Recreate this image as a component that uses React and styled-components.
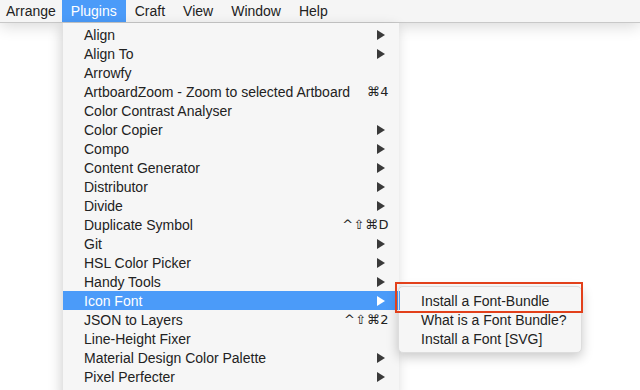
import styled, { createGlobalStyle } from 'styled-components';

const GlobalStyle = createGlobalStyle`
  html, body {
    margin: 0;
    padding: 0;
    background: #fff;
    overflow: hidden;
  }
  body {
    font-family: "Liberation Sans", Arial, "DejaVu Sans", sans-serif;
    font-size: 13px;
    color: #222;
  }
`;

const Screen = styled.div`
  width: 640px;
  height: 390px;
  position: relative;
  overflow: hidden;
  background: #fff;
`;

const MenuBar = styled.div`
  height: 22px;
  display: flex;
  align-items: stretch;
  background: #f5f5f5;
  border-bottom: 1px solid #c8c8c8;
  box-shadow: 0 3px 16px rgba(0, 0, 0, 0.16);
  position: relative;
  z-index: 1;
`;

const BarItem = styled.div`
  display: flex;
  align-items: center;
  padding: 0 ${(p) => p.$pad || 9}px;
  font-size: 14px;
  color: ${(p) => (p.$active ? '#fff' : '#222')};
  background: ${(p) => (p.$active ? '#4b9bf9' : 'transparent')};
`;

const Dropdown = styled.div`
  position: absolute;
  top: 23px;
  left: 63px;
  width: 336px;
  padding: 2px 0 12px;
  background: #f6f6f6;
  box-shadow: -2px 4px 12px rgba(0, 0, 0, 0.18);
  z-index: 2;
`;

const Row = styled.div`
  position: relative;
  height: 19px;
  display: flex;
  align-items: center;
  padding: 0 10px 0 21px;
  font-size: 14px;
  color: ${(p) => (p.$active ? '#fff' : '#222')};
  background: ${(p) => (p.$active ? '#4b9bf9' : 'transparent')};
`;

const Label = styled.span`
  flex: 1;
  white-space: nowrap;
`;

const Shortcut = styled.span`
  font-family: "DejaVu Sans", sans-serif;
  font-size: 13px;
  letter-spacing: 0.5px;
`;

const Arrow = styled.span`
  width: 0;
  height: 0;
  margin-right: 4px;
  border-top: 5px solid transparent;
  border-bottom: 5px solid transparent;
  border-left: 8px solid ${(p) => (p.$active ? '#fff' : '#3a3a3a')};
`;

const Submenu = styled.div`
  position: absolute;
  top: -5px;
  left: 335px;
  width: 182px;
  padding: 4px 0;
  background: #f6f6f6;
  border-radius: 5px;
  border: 1px solid #ddd;
  box-shadow: 0 4px 12px rgba(0, 0, 0, 0.22);
  z-index: 3;
`;

const SubRow = styled.div`
  height: 19px;
  display: flex;
  align-items: center;
  padding-left: 21px;
  font-size: 14px;
  color: #222;
  white-space: nowrap;
  border-left: 1px solid ${(p) => (p.$focus ? '#4b9bf9' : 'transparent')};
`;

const Callout = styled.div`
  position: absolute;
  top: -9px;
  left: 332px;
  width: 184px;
  height: 27px;
  border: 2px solid #e2401b;
  z-index: 4;
  pointer-events: none;
`;

const items = [
  { label: 'Align', sub: true },
  { label: 'Align To', sub: true },
  { label: 'Arrowfy' },
  { label: 'ArtboardZoom - Zoom to selected Artboard', key: '⌘4' },
  { label: 'Color Contrast Analyser' },
  { label: 'Color Copier', sub: true },
  { label: 'Compo', sub: true },
  { label: 'Content Generator', sub: true },
  { label: 'Distributor', sub: true },
  { label: 'Divide', sub: true },
  { label: 'Duplicate Symbol', key: '^⇧⌘D' },
  { label: 'Git', sub: true },
  { label: 'HSL Color Picker', sub: true },
  { label: 'Handy Tools', sub: true },
  { label: 'Icon Font', sub: true, active: true },
  { label: 'JSON to Layers', key: '^⇧⌘2' },
  { label: 'Line-Height Fixer' },
  { label: 'Material Design Color Palette', sub: true },
  { label: 'Pixel Perfecter', sub: true },
];

const bar = [
  { label: 'Arrange', pad: 6 },
  { label: 'Plugins', active: true },
  { label: 'Craft' },
  { label: 'View' },
  { label: 'Window' },
  { label: 'Help' },
];

export default function App() {
  return (
    <Screen>
      <GlobalStyle />
      <MenuBar>
        {bar.map((b) => (
          <BarItem key={b.label} $active={b.active} $pad={b.pad}>
            {b.label}
          </BarItem>
        ))}
      </MenuBar>
      <Dropdown>
        {items.map((it) => (
          <Row key={it.label} $active={it.active}>
            <Label>{it.label}</Label>
            {it.key && <Shortcut>{it.key}</Shortcut>}
            {it.sub && <Arrow $active={it.active} />}
            {it.active && (
              <>
                <Submenu>
                  <SubRow $focus>Install a Font-Bundle</SubRow>
                  <SubRow>What is a Font Bundle?</SubRow>
                  <SubRow>Install a Font [SVG]</SubRow>
                </Submenu>
                <Callout />
              </>
            )}
          </Row>
        ))}
      </Dropdown>
    </Screen>
  );
}
